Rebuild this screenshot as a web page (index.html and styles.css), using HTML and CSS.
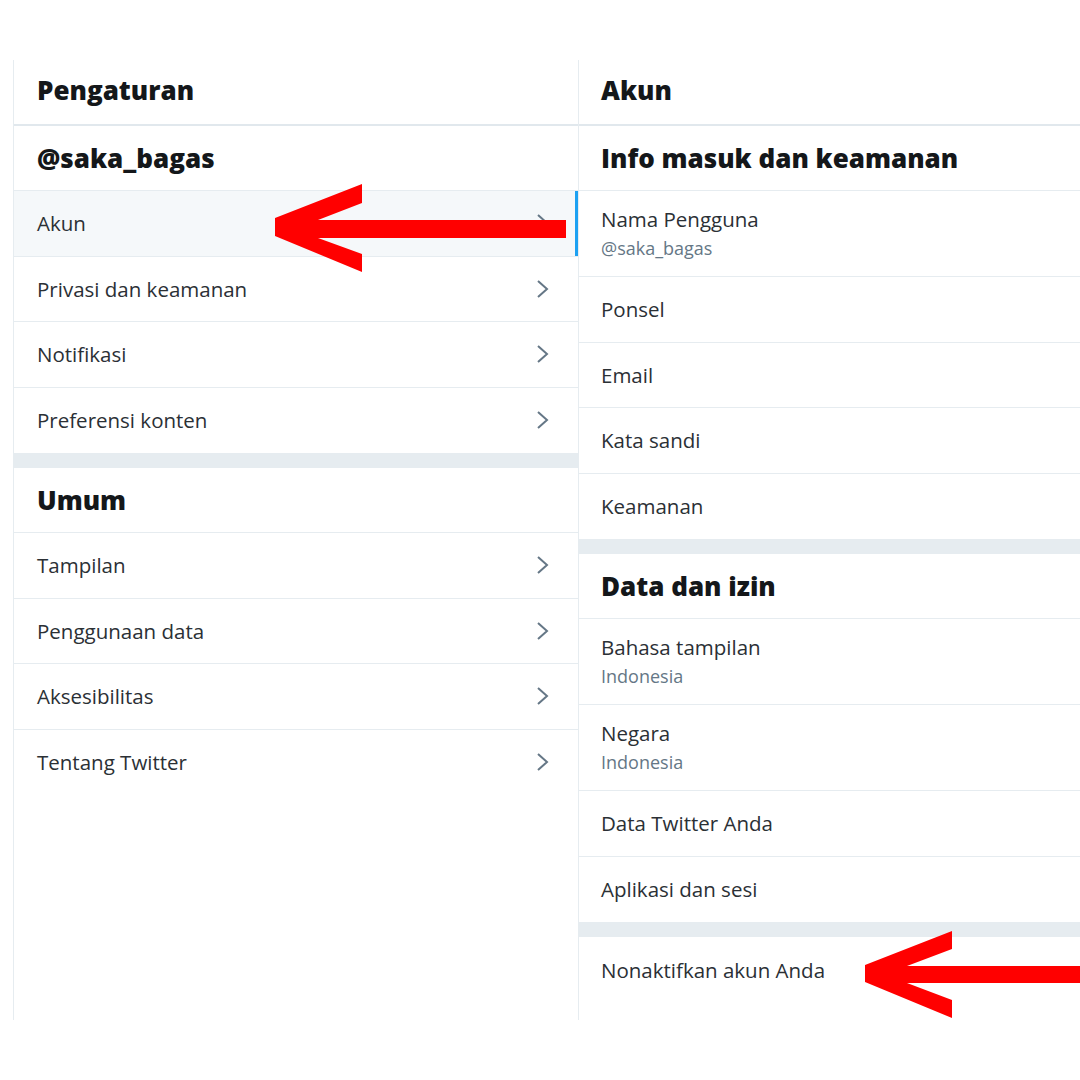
FILE: index.html
```html
<!DOCTYPE html>
<html lang="id">
<head>
<meta charset="utf-8">
<title>Pengaturan</title>
<link rel="stylesheet" href="styles.css">
</head>
<body>
<div class="page">
  <div class="layout">
    <section class="col col-left">
      <div class="col-header"><h1>Pengaturan</h1></div>
      <div class="sec-title"><h2>@saka_bagas</h2></div>
      <a class="row active"><span class="label">Akun</span><svg class="chev" viewBox="0 0 14 20"><path d="M2 2 L11 10 L2 18"/></svg></a>
      <a class="row"><span class="label">Privasi dan keamanan</span><svg class="chev" viewBox="0 0 14 20"><path d="M2 2 L11 10 L2 18"/></svg></a>
      <a class="row"><span class="label">Notifikasi</span><svg class="chev" viewBox="0 0 14 20"><path d="M2 2 L11 10 L2 18"/></svg></a>
      <a class="row last"><span class="label">Preferensi konten</span><svg class="chev" viewBox="0 0 14 20"><path d="M2 2 L11 10 L2 18"/></svg></a>
      <div class="band"></div>
      <div class="sec-title"><h2>Umum</h2></div>
      <a class="row"><span class="label">Tampilan</span><svg class="chev" viewBox="0 0 14 20"><path d="M2 2 L11 10 L2 18"/></svg></a>
      <a class="row"><span class="label">Penggunaan data</span><svg class="chev" viewBox="0 0 14 20"><path d="M2 2 L11 10 L2 18"/></svg></a>
      <a class="row"><span class="label">Aksesibilitas</span><svg class="chev" viewBox="0 0 14 20"><path d="M2 2 L11 10 L2 18"/></svg></a>
      <a class="row last"><span class="label">Tentang Twitter</span><svg class="chev" viewBox="0 0 14 20"><path d="M2 2 L11 10 L2 18"/></svg></a>
    </section>
    <section class="col col-right">
      <div class="col-header"><h1>Akun</h1></div>
      <div class="sec-title"><h2>Info masuk dan keamanan</h2></div>
      <a class="row tall"><span class="label">Nama Pengguna</span><span class="sub">@saka_bagas</span></a>
      <a class="row"><span class="label">Ponsel</span></a>
      <a class="row"><span class="label">Email</span></a>
      <a class="row"><span class="label">Kata sandi</span></a>
      <a class="row last"><span class="label">Keamanan</span></a>
      <div class="band"></div>
      <div class="sec-title"><h2>Data dan izin</h2></div>
      <a class="row tall"><span class="label">Bahasa tampilan</span><span class="sub">Indonesia</span></a>
      <a class="row tall"><span class="label">Negara</span><span class="sub">Indonesia</span></a>
      <a class="row"><span class="label">Data Twitter Anda</span></a>
      <a class="row last"><span class="label">Aplikasi dan sesi</span></a>
      <div class="band"></div>
      <a class="row last"><span class="label">Nonaktifkan akun Anda</span></a>
    </section>
  </div>
  <svg class="arrow arrow-1" viewBox="0 0 300 90" width="300" height="90">
    <polygon points="0,34 0,52 87,88 87,70 43,54 291,54 291,36 43,36 87,19 87,0"/>
  </svg>
  <svg class="arrow arrow-2" viewBox="0 0 220 90" width="220" height="90">
    <polygon points="0,34 0,51 87,87 87,69 42,52 220,52 220,35 42,35 87,18 87,0"/>
  </svg>
</div>
</body>
</html>
```
FILE: styles.css
```css
html, body {
  margin: 0;
  padding: 0;
  background: #ffffff;
}
body {
  font-family: "Open Sans", "Noto Sans", "Liberation Sans", sans-serif;
  color: #14171a;
  width: 1080px;
  height: 1080px;
  overflow: hidden;
}
.page {
  position: relative;
  width: 1080px;
  height: 1080px;
  padding-top: 60px;
  box-sizing: border-box;
}
.layout {
  display: flex;
  height: 960px;
  padding-left: 13px;
}
.col {
  display: flex;
  flex-direction: column;
  height: 960px;
  box-sizing: border-box;
}
.col-left {
  width: 566px;
  flex: none;
  border-left: 1px solid #e6ecf0;
  border-right: 1px solid #e6ecf0;
}
.col-right {
  width: 520px;
  flex: none;
}
.col-header {
  height: 66px;
  box-sizing: border-box;
  border-bottom: 2px solid #e1e8ed;
  display: flex;
  align-items: center;
  padding: 0 0 4px 23px;
  flex: none;
}
.col-right .col-header { padding-left: 22px; }
h1, h2 {
  margin: 0;
  font-size: 26px;
  font-weight: 800;
  color: #14171a;
  letter-spacing: 0;
}
.sec-title {
  height: 65px;
  box-sizing: border-box;
  border-bottom: 1px solid #e6ecf0;
  display: flex;
  align-items: center;
  padding-left: 23px;
  flex: none;
}
.col-right .sec-title { padding-left: 22px; }
.row {
  height: 65.5px;
  box-sizing: border-box;
  border-bottom: 1px solid #e6ecf0;
  display: flex;
  align-items: center;
  justify-content: space-between;
  padding: 0 28px 0 23px;
  font-size: 20.5px;
  color: #2b3035;
  flex: none;
}
.col-right .row {
  padding-left: 22px;
  flex-direction: column;
  align-items: flex-start;
  justify-content: center;
}
.row.last { border-bottom: none; }
.col-right .row.tall {
  height: 86px;
  padding-top: 14px;
  justify-content: flex-start;
}
.label { line-height: 28px; }
.sub {
  font-size: 18px;
  line-height: 30px;
  color: #657786;
}
.row.active {
  background: #f5f8fa;
  box-shadow: inset -3px 0 0 #1da1f2;
}
.band {
  height: 15px;
  background: #e6ecf0;
  flex: none;
}
.chev {
  width: 14px;
  height: 20px;
  fill: none;
  stroke: #657786;
  stroke-width: 2;
}
.arrow {
  position: absolute;
  fill: #ff0000;
}
.arrow-1 { left: 275px; top: 184px; }
.arrow-2 { left: 865px; top: 931px; }
```
